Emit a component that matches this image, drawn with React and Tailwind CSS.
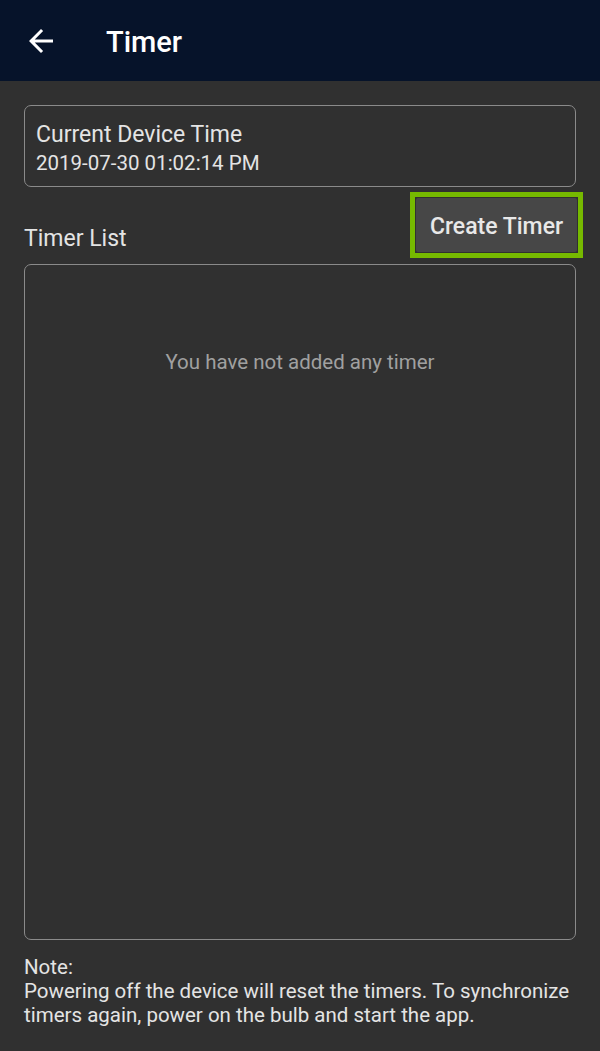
export default function App() {
  return (
    <div
      className="w-[600px] h-[1051px] bg-[#303030] overflow-hidden"
      style={{ fontFamily: "Roboto, 'Liberation Sans', sans-serif" }}
    >
      {/* Header */}
      <div className="h-[81px] bg-[#06132a] flex items-center">
        <svg
          className="ml-[23px]"
          width="36"
          height="36"
          viewBox="0 0 24 24"
          fill="#ffffff"
        >
          <path d="M20 11H7.83l5.59-5.59L12 4l-8 8 8 8 1.41-1.41L7.83 13H20v-2z" />
        </svg>
        <h1 className="ml-[47px] mt-[4px] text-[29px] font-medium text-white leading-none">
          Timer
        </h1>
      </div>

      <div className="px-6 pt-6">
        {/* Device time */}
        <div className="h-[82px] border border-[#8a8a8a] rounded-[7px] pl-[11px] pt-[17px]">
          <div className="text-[23px] leading-[24px] text-[#e4e4e4]">
            Current Device Time
          </div>
          <div className="mt-[4px] text-[20.5px] leading-[24px] text-[#e4e4e4]">
            2019-07-30 01:02:14 PM
          </div>
        </div>

        {/* Timer list header */}
        <div className="mt-[5px] flex items-end justify-between">
          <span className="pb-[7px] text-[23px] leading-[24px] text-[#e4e4e4]">
            Timer List
          </span>
          <div className="-mr-[7px] border-[5px] border-[#76b900] p-[1px]">
            <button className="w-[161px] h-[54px] pt-[5px] bg-[#474747] rounded-[2px] text-[23px] font-medium text-[#e8e8e8]">
              Create Timer
            </button>
          </div>
        </div>

        {/* Timer list */}
        <div className="mt-[6px] h-[676px] border border-[#8a8a8a] rounded-[7px] pt-[85px] text-center">
          <span className="text-[20.5px] leading-[24px] text-[#a0a0a0]">
            You have not added any timer
          </span>
        </div>

        {/* Note */}
        <div className="mt-[15px] text-[20.5px] leading-[24px] text-[#e4e4e4]">
          <div>Note:</div>
          <div>
            Powering off the device will reset the timers. To synchronize
            timers again, power on the bulb and start the app.
          </div>
        </div>
      </div>
    </div>
  );
}
